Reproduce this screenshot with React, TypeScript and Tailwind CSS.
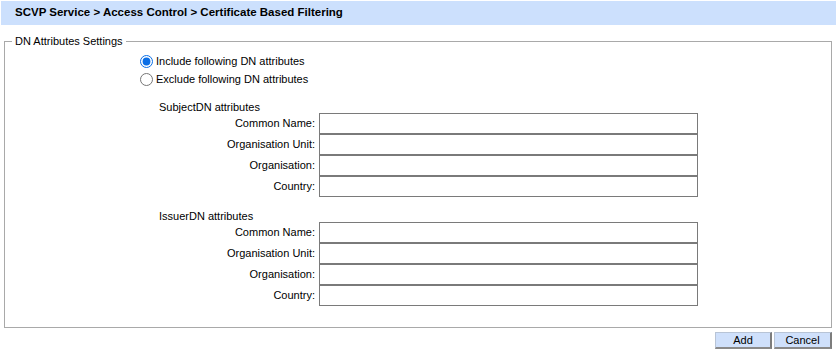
import React from "react";

const fields = ["Common Name:", "Organisation Unit:", "Organisation:", "Country:"];

function AttrGroup({ title }: { title: string }) {
    return (
        <div className="grid grid-cols-[156px_379px] gap-x-[4px]">
            <div className="col-span-2 h-[14px] leading-[17px]">{title}</div>
            {fields.map((label) => (
                <React.Fragment key={label}>
                    <label className="h-[21px] flex items-center justify-end">{label}</label>
                    <input type="text" className="h-[21px] w-[379px] border border-[#7a7a7a] bg-white outline-none" />
                </React.Fragment>
            ))}
        </div>
    );
}

export default function App() {
    return (
        <div className="w-[837px] h-[354px] bg-white text-black text-[11px] font-['Liberation_Sans',Arial,sans-serif] pt-[1px]">
            {/* HEADER */}
            <div className="mx-[1px] h-[24px] bg-[#cce0fd] pl-[14px] flex items-center font-bold text-[11.5px]">
                SCVP Service &gt; Access Control &gt; Certificate Based Filtering
            </div>

            {/* FIELDSET */}
            <fieldset className="mt-[9px] ml-[4px] mr-[5px] h-[294px] border border-[#a9a9a9]">
                <legend className="ml-[7px] px-[3px] leading-[14px]">DN Attributes Settings</legend>

                <div className="pl-[135px] mt-[4px]">
                    <label className="h-[18px] flex items-center gap-[3px]">
                        <input type="radio" name="dn" defaultChecked className="m-0 w-[13px] h-[13px] accent-[#0a6ee6]" />
                        Include following DN attributes
                    </label>
                    <label className="h-[18px] flex items-center gap-[3px]">
                        <input type="radio" name="dn" className="m-0 w-[13px] h-[13px]" />
                        Exclude following DN attributes
                    </label>
                </div>

                <div className="pl-[154px] mt-[11px]">
                    <AttrGroup title="SubjectDN attributes" />
                    <div className="h-[11px]" />
                    <AttrGroup title="IssuerDN attributes" />
                </div>
            </fieldset>

            {/* BUTTONS */}
            <div className="flex justify-end gap-[2px] mr-[5px] mt-[4px]">
                <button className="w-[57px] h-[17px] bg-[#cfe0fb] border border-[#b8c4d6] border-r-2 border-b-2 border-r-[#7d7d7d] border-b-[#8a8a8a] text-[11px] leading-none">
                    Add
                </button>
                <button className="w-[58px] h-[17px] bg-[#cfe0fb] border border-[#b8c4d6] border-r-2 border-b-2 border-r-[#7d7d7d] border-b-[#8a8a8a] text-[11px] leading-none">
                    Cancel
                </button>
            </div>
        </div>
    );
}
